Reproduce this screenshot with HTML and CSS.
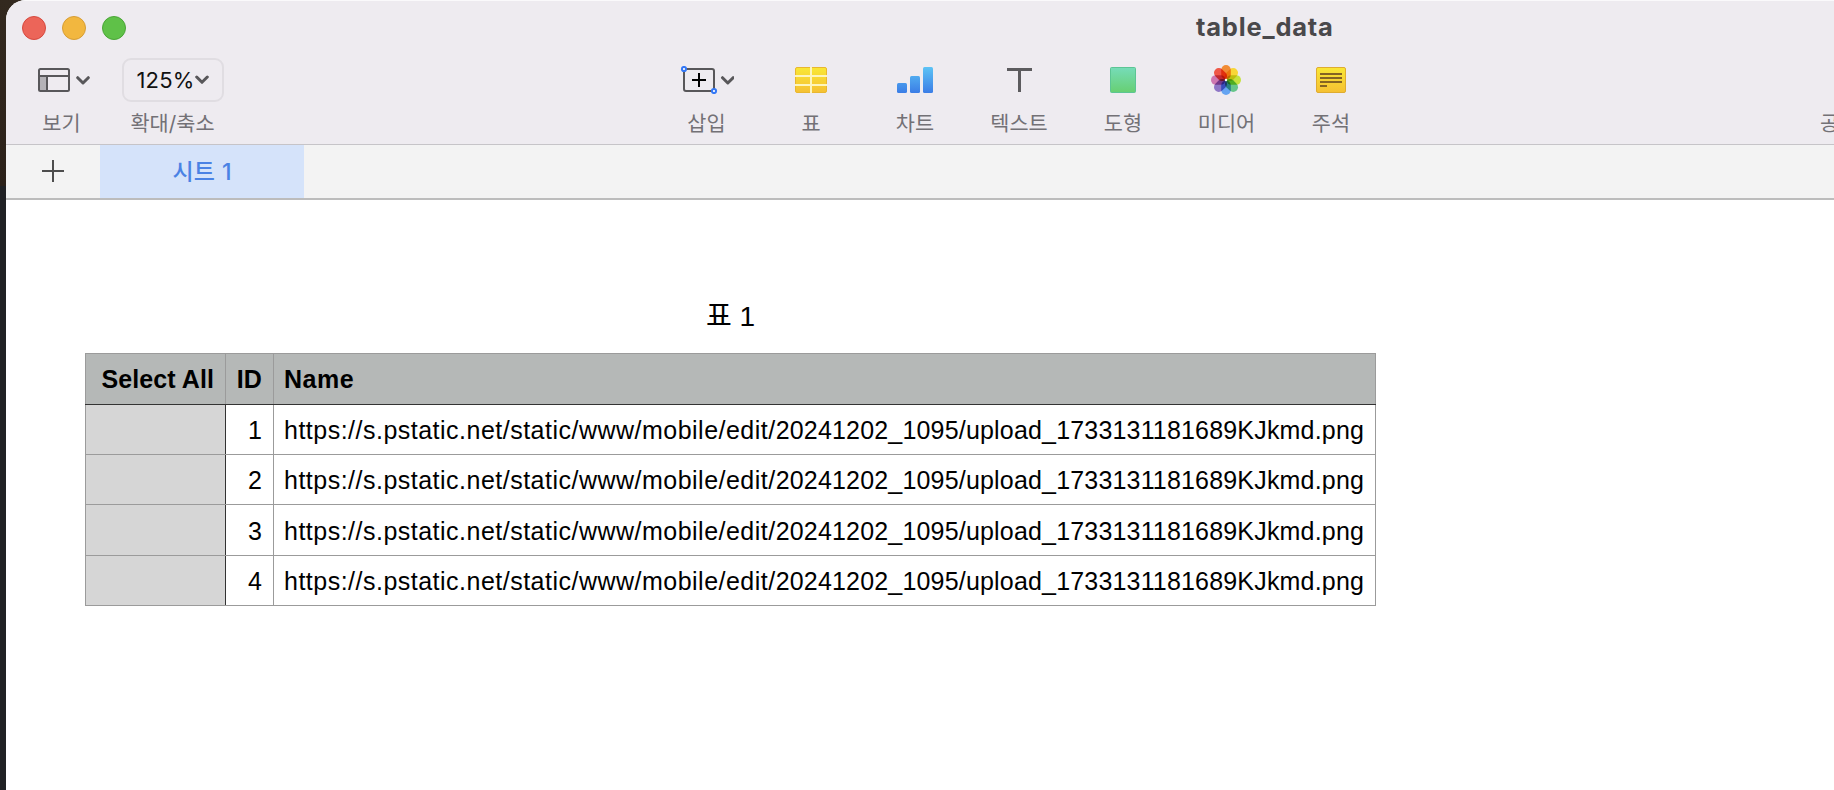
FILE: index.html
```
<!DOCTYPE html>
<html lang="ko">
<head>
<meta charset="utf-8">
<title>table_data</title>
<link rel="stylesheet" href="styles.css">
</head>
<body>
<div class="window">
  <header class="chrome">
    <div class="titlebar">
      <div class="lights"><span class="light red"></span><span class="light yellow"></span><span class="light green"></span></div>
      <h1 class="title">table_data</h1>
    </div>
    <div class="toolbar">
      <div class="tool view">
        <div class="face">
          <svg width="52" height="24" viewBox="0 0 52 24" fill="none">
            <rect x="2" y="9" width="8" height="13" fill="#b4b2b7"/>
            <path d="M1 8H31M9 8V23" stroke="#58575a" stroke-width="2"/>
            <rect x="1" y="1" width="30" height="22" rx="1.5" stroke="#58575a" stroke-width="2"/>
            <path d="M39.7 9.7L45 15L50.3 9.7" stroke="#58575a" stroke-width="3" stroke-linecap="round" stroke-linejoin="round"/>
          </svg>
        </div>
        <span class="label">보기</span>
      </div>
      <div class="tool zoom">
        <div class="face zoombox"><span class="percent">125%</span>
          <svg width="14" height="10" viewBox="0 0 14 10" fill="none"><path d="M1.7 2L7 7.3L12.3 2" stroke="#58575a" stroke-width="3" stroke-linecap="round" stroke-linejoin="round"/></svg>
        </div>
        <span class="label">확대/축소</span>
      </div>
      <div class="inserts">
        <div class="tool insert">
          <div class="face">
            <svg width="54" height="28" viewBox="0 0 54 28" fill="none">
              <rect x="4" y="3" width="30" height="22" rx="2" stroke="#58575a" stroke-width="2"/>
              <path d="M12 14H26M19 7V21" stroke="#000" stroke-width="2"/>
              <circle cx="4" cy="3" r="2.1" fill="#fff" stroke="#3478f6" stroke-width="2"/>
              <circle cx="34" cy="25" r="2.1" fill="#fff" stroke="#3478f6" stroke-width="2"/>
              <path d="M42.5 11.7L47.8 17L53.1 11.7" stroke="#58575a" stroke-width="3" stroke-linecap="round" stroke-linejoin="round"/>
            </svg>
          </div>
          <span class="label">삽입</span>
        </div>
        <div class="tool">
          <div class="face">
            <svg width="32" height="26" viewBox="0 0 32 26">
              <defs><linearGradient id="gy" x2="0" y2="1"><stop stop-color="#f9e735"/><stop offset="1" stop-color="#f5c033"/></linearGradient></defs>
              <rect x=".5" y=".5" width="31" height="25" rx="1.5" fill="url(#gy)" stroke="#e9b72f"/>
              <path d="M0 9H32M0 18H32M16 0V26" stroke="#fdf5bd" stroke-width="2"/>
            </svg>
          </div>
          <span class="label">표</span>
        </div>
        <div class="tool">
          <div class="face">
            <svg width="36" height="26" viewBox="0 0 36 26">
              <defs><linearGradient id="gb" gradientUnits="userSpaceOnUse" x1="0" y1="0" x2="0" y2="26"><stop stop-color="#5cc3f5"/><stop offset="1" stop-color="#3b7de6"/></linearGradient></defs>
              <g fill="url(#gb)"><rect y="16" width="10" height="10" rx="1.5"/><rect x="13" y="9" width="10" height="17" rx="1.5"/><rect x="26" width="10" height="26" rx="1.5"/></g>
            </svg>
          </div>
          <span class="label">차트</span>
        </div>
        <div class="tool">
          <div class="face">
            <svg width="25" height="24" viewBox="0 0 25 24"><path d="M0 0H25V3H14V24H11V3H0Z" fill="#5c5b5e"/></svg>
          </div>
          <span class="label">텍스트</span>
        </div>
        <div class="tool">
          <div class="face">
            <svg width="26" height="26" viewBox="0 0 26 26">
              <defs><linearGradient id="gg" x2="0" y2="1"><stop stop-color="#76dcb9"/><stop offset="1" stop-color="#67cf72"/></linearGradient></defs>
              <rect x=".5" y=".5" width="25" height="25" rx="1" fill="url(#gg)" stroke="#5cc594"/>
            </svg>
          </div>
          <span class="label">도형</span>
        </div>
        <div class="tool media">
          <div class="face">
            <svg class="flower" width="30" height="30" viewBox="-15 -15 30 30">
              <rect class="petal" x="-4.8" y="-15" width="9.6" height="14.5" rx="4.8" fill="#f18b35"/>
              <rect class="petal" x="-4.8" y="-15" width="9.6" height="14.5" rx="4.8" fill="#f8d637" transform="rotate(45)"/>
              <rect class="petal" x="-4.8" y="-15" width="9.6" height="14.5" rx="4.8" fill="#c5e23e" transform="rotate(90)"/>
              <rect class="petal" x="-4.8" y="-15" width="9.6" height="14.5" rx="4.8" fill="#66c58a" transform="rotate(135)"/>
              <rect class="petal" x="-4.8" y="-15" width="9.6" height="14.5" rx="4.8" fill="#65a4f2" transform="rotate(180)"/>
              <rect class="petal" x="-4.8" y="-15" width="9.6" height="14.5" rx="4.8" fill="#8e76c6" transform="rotate(225)"/>
              <rect class="petal" x="-4.8" y="-15" width="9.6" height="14.5" rx="4.8" fill="#ce77b0" transform="rotate(270)"/>
              <rect class="petal" x="-4.8" y="-15" width="9.6" height="14.5" rx="4.8" fill="#ee5747" transform="rotate(315)"/>
              <circle r="1.2" fill="#fff"/>
            </svg>
          </div>
          <span class="label">미디어</span>
        </div>
        <div class="tool">
          <div class="face">
            <svg width="30" height="26" viewBox="0 0 30 26">
              <rect x=".5" y=".5" width="29" height="25" rx="1.5" fill="url(#gy)" stroke="#dfac30"/>
              <path d="M4 7H26M4 11H26M4 15H26M4 19H11" stroke="#856423" stroke-width="2"/>
            </svg>
          </div>
          <span class="label">주석</span>
        </div>
      </div>
      <div class="tool share"><div class="face"></div><span class="label">공유</span></div>
    </div>
  </header>
  <nav class="tabs">
    <div class="add"><svg width="22" height="22" viewBox="0 0 22 22"><path d="M0 11H22M11 0V22" stroke="#4d4d4d" stroke-width="2"/></svg></div>
    <div class="tab">시트 1</div>
  </nav>
  <main class="canvas">
    <table class="sheet">
      <caption>표 1</caption>
      <colgroup><col class="c-select"><col class="c-id"><col class="c-name"></colgroup>
      <thead><tr><th class="right">Select All</th><th class="right">ID</th><th class="h-name">Name</th></tr></thead>
      <tbody>
        <tr><td class="side"></td><td class="right">1</td><td><span class="path">https://s.pstatic.net/static/www/mobile/edit/</span><span class="file">20241202_1095/upload_1733131181689KJkmd.png</span></td></tr>
        <tr><td class="side"></td><td class="right">2</td><td><span class="path">https://s.pstatic.net/static/www/mobile/edit/</span><span class="file">20241202_1095/upload_1733131181689KJkmd.png</span></td></tr>
        <tr class="tall"><td class="side"></td><td class="right">3</td><td><span class="path">https://s.pstatic.net/static/www/mobile/edit/</span><span class="file">20241202_1095/upload_1733131181689KJkmd.png</span></td></tr>
        <tr><td class="side"></td><td class="right">4</td><td><span class="path">https://s.pstatic.net/static/www/mobile/edit/</span><span class="file">20241202_1095/upload_1733131181689KJkmd.png</span></td></tr>
      </tbody>
    </table>
  </main>
</div>
</body>
</html>
```
FILE: styles.css
```
* { box-sizing: border-box; }
body {
  margin: 0;
  width: 1834px;
  height: 790px;
  overflow: hidden;
  padding-left: 6px;
  background: linear-gradient(#33291f, #2b2119 186px, #202124 186px);
  font-family: Inter, "Noto Sans CJK KR", sans-serif;
}
svg { display: block; flex: none; }
.window {
  height: 790px;
  overflow: hidden;
  background: #fff;
  border-top-left-radius: 20px;
}
.chrome {
  height: 145px;
  background: #eeebf0;
  border-top: 1px solid #faf9fb;
  border-bottom: 1px solid #c6c4c8;
}
.titlebar { display: flex; height: 57px; padding: 15px 0 0 16px; }
.lights { display: flex; gap: 16px; width: 1174px; }
.light { width: 24px; height: 24px; border-radius: 50%; border: 1px solid; }
.red { background: #ec6559; border-color: #d5493f; }
.yellow { background: #f2b73f; border-color: #d69d36; }
.green { background: #5fc148; border-color: #4aa537; }
.title {
  margin: -3px 0 0;
  font-size: 25.5px;
  line-height: 28px;
  font-weight: 700;
  letter-spacing: 0.8px;
  color: #49484b;
}
.toolbar { display: flex; height: 86px; padding-left: 32px; white-space: nowrap; }
.tool { display: flex; flex-direction: column; align-items: center; }
.face { display: flex; height: 44px; align-items: center; justify-content: center; }
.label { color: #737176; font-size: 20.8px; line-height: 30px; margin-top: 7px; }
.view { width: 52px; }
.view .label { margin-left: -5px; }
.zoom { width: 102px; margin-left: 32px; }
.zoom .label { margin-left: -1px; }
.zoombox { width: 102px; border: 2px solid #e0dde2; border-radius: 9px; padding-right: 1px; }
.percent { font-size: 22px; line-height: 26px; letter-spacing: 0.2px; color: #111; }
.inserts { display: grid; grid-template-columns: repeat(7, 104px); margin-left: 431px; }
.insert .label { margin-left: -1px; }
.media .face { padding-right: 2px; }
.media .label { margin-left: -1px; }
.flower { isolation: isolate; }
.petal { mix-blend-mode: multiply; }
.share { margin-left: 437px; }
.tabs {
  display: flex;
  height: 55px;
  background: #f3f3f3;
  border-bottom: 2px solid #bcbcbc;
}
.add { display: flex; width: 94px; justify-content: center; align-items: center; padding-bottom: 1px; }
.tab {
  width: 204px;
  background: #d5e3fa;
  color: #4a82e4;
  font-size: 23px;
  font-weight: 500;
  line-height: 55px;
  word-spacing: 1px;
  text-align: center;
}
.canvas { padding: 92px 0 0 79px; }
.sheet {
  width: 1291px;
  table-layout: fixed;
  border-collapse: collapse;
  font-family: "Liberation Sans", "Noto Sans CJK KR", sans-serif;
  font-size: 25px;
  line-height: 30px;
  white-space: nowrap;
  color: #000;
}
caption { height: 61px; font-size: 28px; line-height: 50px; }
.c-select { width: 140px; }
.c-id { width: 48px; }
.c-name { width: 1102px; }
th, td { height: 50px; padding: 1px 10px 0; border: 1px solid #9b9b9b; text-align: left; }
th { height: 51px; padding: 0 11px 1px 10px; background: #b5b8b7; border-bottom-color: #333; letter-spacing: 0.1px; }
.h-name { letter-spacing: 0.5px; }
.tall td { height: 51px; }
.right { text-align: right; }
td.right { padding-right: 11px; }
.side { background: #d6d6d6; border-right-color: #333; }
.path { letter-spacing: 0.49px; }
.file { letter-spacing: 0.18px; }
```
